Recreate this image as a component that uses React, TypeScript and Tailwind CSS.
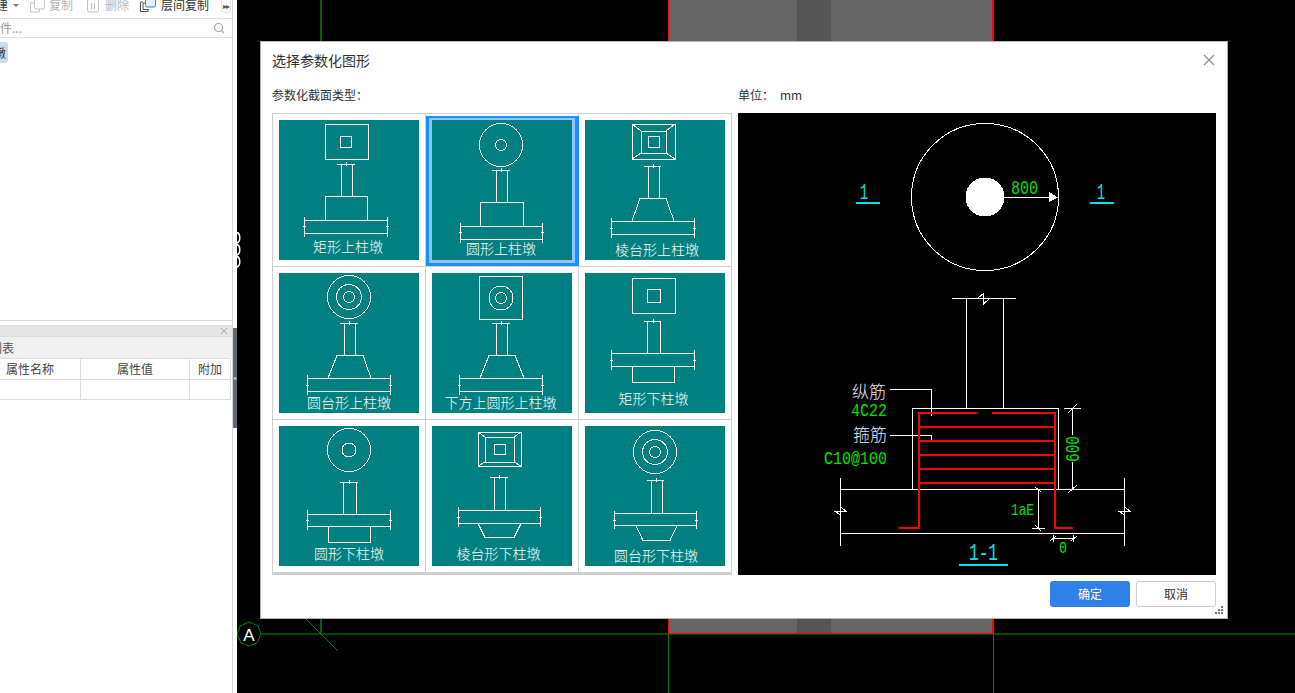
import type { ReactNode } from "react";

type Tile = {
  label: string;
  labelX: number;
  labelY: number;
  plan: ReactNode;
  elevation: ReactNode;
};

function Box({ x1, x2, y1, y2 }: { x1: number; x2: number; y1: number; y2: number }) {
  return <rect x={x1 + 0.5} y={y1 + 0.5} width={x2 - x1} height={y2 - y1} />;
}

function Ring({ cx, cy, r }: { cx: number; cy: number; r: number }) {
  return <circle cx={cx} cy={cy} r={r} />;
}

// frustum seen from above: outer box, inner box, corner lines
function Frustum({ o, m, i }: { o: number[]; m: number[]; i: number[] }) {
  return (
    <>
      <Box x1={o[0]} x2={o[1]} y1={o[2]} y2={o[3]} />
      <Box x1={m[0]} x2={m[1]} y1={m[2]} y2={m[3]} />
      <Box x1={i[0]} x2={i[1]} y1={i[2]} y2={i[3]} />
      <path
        d={`M${o[0]} ${o[2]}L${m[0]} ${m[2]}M${o[1]} ${o[2]}L${m[1]} ${m[2]}M${o[0]} ${o[3]}L${m[0]} ${m[3]}M${o[1]} ${o[3]}L${m[1]} ${m[3]}`}
      />
    </>
  );
}

function Column({ capL, capR, l, r, top, end }: { capL: number; capR: number; l: number; r: number; top: number; end: number }) {
  const mid = Math.round((capL + capR) / 2);
  return (
    <path
      d={`M${capL} ${top + 0.5}H${capR}M${l + 0.5} ${top}V${end}M${r + 0.5} ${top}V${end}M${mid + 0.5} ${top - 2}V${top + 2}`}
    />
  );
}

function Slab({ l, r, top, bottom, v1, v2, tick }: { l: number; r: number; top: number; bottom: number; v1: number; v2: number; tick: number }) {
  return (
    <path
      d={`M${l} ${top + 0.5}H${r}M${l} ${bottom + 0.5}H${r}M${l + 0.5} ${v1}V${v2}M${r + 0.5} ${v1}V${v2}M${l - 1} ${tick + 0.5}H${l + 2}M${r - 1} ${tick + 0.5}H${r + 2}`}
    />
  );
}

const tiles: Tile[] = [
  {
    label: "矩形上柱墩",
    labelX: 69,
    labelY: 132,
    plan: (
      <>
        <Box x1={46} x2={89} y1={4} y2={39} />
        <Box x1={61} x2={72} y1={16} y2={27} />
      </>
    ),
    elevation: (
      <>
        <Column capL={58} capR={76} l={62} r={73} top={44} end={76} />
        <Box x1={46} x2={88} y1={76} y2={100} />
        <Slab l={25} r={108} top={100} bottom={113} v1={97} v2={117} tick={106} />
      </>
    ),
  },
  {
    label: "圆形上柱墩",
    labelX: 69,
    labelY: 134,
    plan: (
      <>
        <Ring cx={69} cy={25} r={21.5} />
        <Ring cx={69} cy={25} r={5.5} />
      </>
    ),
    elevation: (
      <>
        <Column capL={60} capR={78} l={64} r={75} top={50} end={82} />
        <Box x1={48} x2={91} y1={82} y2={106} />
        <Slab l={28} r={110} top={106} bottom={119} v1={103} v2={123} tick={112} />
      </>
    ),
  },
  {
    label: "棱台形上柱墩",
    labelX: 72,
    labelY: 135,
    plan: <Frustum o={[47, 90, 4, 39]} m={[56, 81, 11, 33]} i={[63, 74, 16, 27]} />,
    elevation: (
      <>
        <Column capL={59} capR={76} l={63} r={74} top={46} end={78} />
        <path d="M55 78.5H81L89 101M55 78.5L47 101" />
        <Slab l={26} r={109} top={101} bottom={114} v1={98} v2={118} tick={108} />
      </>
    ),
  },
  {
    label: "圆台形上柱墩",
    labelX: 70,
    labelY: 135,
    plan: (
      <>
        <Ring cx={70} cy={24} r={21.5} />
        <Ring cx={70} cy={24} r={12.5} />
        <Ring cx={70} cy={24} r={5.5} />
      </>
    ),
    elevation: (
      <>
        <Column capL={61} capR={79} l={65} r={76} top={50} end={82} />
        <path d="M58 82.5H84L92 105M58 82.5L49 105" />
        <Slab l={28} r={111} top={105} bottom={118} v1={102} v2={122} tick={112} />
      </>
    ),
  },
  {
    label: "下方上圆形上柱墩",
    labelX: 68.5,
    labelY: 135,
    plan: (
      <>
        <Box x1={47} x2={90} y1={3} y2={46} />
        <Ring cx={69} cy={25} r={12} />
        <Ring cx={69} cy={25} r={5.5} />
      </>
    ),
    elevation: (
      <>
        <Column capL={60} capR={78} l={64} r={75} top={50} end={82} />
        <path d="M57 82.5H83L92 105M57 82.5L48 105" />
        <Slab l={27} r={110} top={105} bottom={118} v1={102} v2={122} tick={112} />
      </>
    ),
  },
  {
    label: "矩形下柱墩",
    labelX: 68.5,
    labelY: 131,
    plan: (
      <>
        <Box x1={47} x2={90} y1={5} y2={40} />
        <Box x1={62} x2={75} y1={16} y2={29} />
      </>
    ),
    elevation: (
      <>
        <Column capL={59} capR={76} l={62} r={75} top={48} end={80} />
        <Slab l={26} r={109} top={80} bottom={93} v1={77} v2={97} tick={87} />
        <Box x1={47} x2={89} y1={93} y2={109} />
      </>
    ),
  },
  {
    label: "圆形下柱墩",
    labelX: 70,
    labelY: 133,
    plan: (
      <>
        <Ring cx={70} cy={24} r={21.5} />
        <Ring cx={70} cy={24} r={7} />
      </>
    ),
    elevation: (
      <>
        <Column capL={61} capR={79} l={64} r={77} top={56} end={88} />
        <Slab l={28} r={111} top={88} bottom={100} v1={84} v2={104} tick={94} />
        <Box x1={49} x2={91} y1={100} y2={116} />
      </>
    ),
  },
  {
    label: "棱台形下柱墩",
    labelX: 66.5,
    labelY: 133,
    plan: <Frustum o={[46, 89, 6, 40]} m={[53, 82, 11, 36]} i={[62, 73, 18, 28]} />,
    elevation: (
      <>
        <Column capL={58} capR={76} l={62} r={73} top={51} end={84} />
        <Slab l={26} r={108} top={84} bottom={97} v1={81} v2={101} tick={91} />
        <path d="M46 97.5L53 111.5H82L89 97.5" />
      </>
    ),
  },
  {
    label: "圆台形下柱墩",
    labelX: 71,
    labelY: 135,
    plan: (
      <>
        <Ring cx={70} cy={26} r={21.5} />
        <Ring cx={70} cy={26} r={12.5} />
        <Ring cx={70} cy={26} r={5.5} />
      </>
    ),
    elevation: (
      <>
        <Column capL={62} capR={79} l={66} r={77} top={54} end={87} />
        <Slab l={29} r={111} top={87} bottom={99} v1={85} v2={103} tick={94} />
        <path d="M51 99.5L58 114.5H85L92 99.5" />
      </>
    ),
  },
];

function TileCell({ tile, selected }: { tile: Tile; selected: boolean }) {
  return (
    <div className="relative border-r border-b border-[#cfcfcf] p-[6px]">
      <svg width="140" height="140" viewBox="0 0 140 140" className="block bg-[#008080]">
        <g fill="none" stroke="#ffffff" strokeWidth="1" shapeRendering="crispEdges">
          {tile.plan}
          {tile.elevation}
        </g>
        <text x={tile.labelX} y={tile.labelY} textAnchor="middle" fontSize="14" fontWeight="300" fill="#ffffff">
          {tile.label}
        </text>
      </svg>
      {selected && (
        <div className="absolute top-[2px] -right-px bottom-0 left-0 border-t-2 border-r-4 border-b-[3px] border-l-[3px] border-[#1890ff]">
          <div className="h-full w-full border-t-2 border-r-[3px] border-b-[3px] border-l-[3px] border-[#8fc5fb]" />
        </div>
      )}
    </div>
  );
}

function CadText({ x, y, width, size, fill, children }: { x: number; y: number; width: number; size: number; fill: string; children: string }) {
  return (
    <text
      x={x}
      y={y}
      fontFamily="'Liberation Mono', monospace"
      fontSize={size}
      fill={fill}
      textLength={width}
      lengthAdjust="spacingAndGlyphs"
    >
      {children}
    </text>
  );
}

// the big detail drawing on the right of the dialog
function Preview() {
  const green = "#00e000";
  const cyan = "#00e6e6";
  return (
    <svg width="478" height="462" viewBox="738 113 478 462" className="block bg-black">
      <g fill="none" stroke="#ffffff" strokeWidth="1" shapeRendering="crispEdges">
        <circle cx="985" cy="197" r="73.5" />
        <circle cx="985" cy="197" r="19" fill="#ffffff" />
        <path d="M1004 197.5H1058" />
        <path d="M1049 192.5L1057 197.5L1049 201.5Z" fill="#ffffff" />

        <path d="M952 298.5H1016M978 298L983.5 293.5V304L989 299" />
        <path d="M966.5 298V408M1003.5 298V408" />
        <path d="M912.5 489V408.5H1058.5V489" />
        <path d="M840 489.5H1125M840 533.5H1125M840.5 478V546M1124.5 478V546" />
        <path d="M841 507L846 511.5H835L841 515" />
        <path d="M1125 507L1130 511.5H1119L1125 515" />

        <path d="M890 389.5H931.5V416" />
        <path d="M890 435.5H931.5V441" />

        <path d="M1064 408.5H1081M1072.5 408V435M1072.5 462V489M1068 413L1077 404M1068 493L1077 485" />
        <path d="M1038.5 489V528M1032 528.5H1045M1035 487L1041 492M1035 525L1041 531" />
        <path d="M1053 538.5H1075M1053.5 535V542M1073.5 535V542M1050 541L1056 536M1071 541L1077 536" />
      </g>

      <g stroke="#ff0000" strokeWidth="2" fill="none" shapeRendering="crispEdges">
        <path d="M899 528H919V413H977" />
        <path d="M992 413H1055V528H1073" />
        <path d="M919 427H1055M919 441H1055M919 455H1055M919 469H1055M919 483H1055" />
      </g>

      <g fill={cyan} shapeRendering="crispEdges">
        <rect x="856" y="202" width="24" height="2" />
        <rect x="1090" y="202" width="24" height="2" />
        <rect x="959" y="564" width="49" height="2" />
      </g>

      <CadText x={860} y={199} width={8} size={22} fill={cyan}>1</CadText>
      <CadText x={1097} y={199} width={8} size={22} fill={cyan}>1</CadText>
      <CadText x={969} y={560} width={29} size={24} fill={cyan}>1-1</CadText>
      <CadText x={1011} y={194} width={27} size={20} fill={green}>800</CadText>
      <CadText x={851} y={416} width={36} size={19} fill={green}>4C22</CadText>
      <CadText x={824} y={464} width={63} size={19} fill={green}>C10@100</CadText>
      <CadText x={1011} y={515} width={23} size={17} fill={green}>1aE</CadText>
      <CadText x={1059} y={553} width={8} size={16} fill={green}>0</CadText>
      <g transform="translate(1079 462) rotate(-90)">
        <CadText x={0} y={0} width={26} size={20} fill={green}>600</CadText>
      </g>

      <text x="852" y="398" fontSize="17" fontWeight="300" fill="#e4e8ff">纵筋</text>
      <text x="853" y="441" fontSize="17" fontWeight="300" fill="#e4e8ff">箍筋</text>
    </svg>
  );
}

function CanvasDrawing() {
  return (
    <svg viewBox="237 0 1058 693" className="block h-[693px] w-[1058px]">
      <g shapeRendering="crispEdges">
        <rect x="669" y="0" width="324" height="633" fill="#666666" />
        <rect x="797" y="0" width="34" height="633" fill="#555555" />
        <rect x="320" y="0" width="2" height="634" fill="#0a5c0a" />
        <rect x="261" y="633" width="1034" height="2" fill="#024a02" />
        <rect x="668" y="634" width="1" height="59" fill="#0a800a" />
        <rect x="993" y="634" width="1" height="59" fill="#0a800a" />
        <rect x="668" y="0" width="1" height="633" fill="#ff0000" />
        <rect x="992" y="0" width="2" height="634" fill="#ff0000" />
        <rect x="668" y="633" width="325" height="1" fill="#ff0000" />
      </g>
      <path d="M306 619L338 651" stroke="#0a800a" strokeWidth="1" />
      <polygon
        points="249,622 258,626 261,634 257,643 249,646 241,643 237,634 240,626"
        fill="none"
        stroke="#0a800a"
        strokeWidth="1"
      />
      <text x="249" y="641" textAnchor="middle" fontFamily="'Liberation Sans', sans-serif" fontSize="17" fill="#ffffff">A</text>
      <path
        d="M236 232.5C241 232.5 241 243 236 243M236 244.5C241 244.5 241 255 236 255M236 256.5C241 256.5 241 267 236 267"
        fill="none"
        stroke="#ffffff"
        strokeWidth="1.5"
      />
    </svg>
  );
}

function LeftPanel() {
  return (
    <aside className="flex h-full w-[237px] shrink-0 bg-white">
      <div className="flex h-full w-[233px] flex-col border-r border-[#d6d6d6] text-xs">
        <div className="relative h-[19px] shrink-0 border-b border-[#e0e0e0]">
          <div className="flex h-[10px] items-center text-[#333]">
            <span className="w-[13px] shrink-0 -translate-x-[4px]">建</span>
            <span className="h-0 w-0 border-x-[3px] border-t-[3px] border-x-transparent border-t-[#777]" />
            <svg width="16" height="13" viewBox="0 0 16 13" fill="none" className="mt-[2px] ml-[10px] shrink-0">
              <path d="M5 3H1.5V12H10.5V9" stroke="#c4c4c4" />
              <rect x="5.5" y="-3" width="10" height="12" rx="1.5" stroke="#c4c4c4" />
            </svg>
            <span className="ml-[4px] shrink-0 text-[#b5b5b5]">复制</span>
            <svg width="13" height="13" viewBox="0 0 13 13" fill="none" className="mt-[2px] ml-[14px] shrink-0">
              <rect x="0.5" y="-2" width="11" height="14" rx="1.5" stroke="#c4c4c4" />
              <path d="M4.5 3V9M7.5 3V9" stroke="#c4c4c4" />
            </svg>
            <span className="ml-[5px] shrink-0 text-[#b5b5b5]">删除</span>
            <svg width="16" height="12" viewBox="0 0 16 12" fill="none" className="mt-[2px] ml-[11px] shrink-0">
              <path d="M3 2H0.5V11.5H8V9" stroke="#555" />
              <path d="M5 3H3V9.5H9" stroke="#555" />
              <rect x="5.5" y="-4" width="10" height="11" rx="1.5" fill="#e3f0ff" stroke="#2f80e7" />
            </svg>
            <span className="ml-[5px] shrink-0 text-[#333]">层间复制</span>
          </div>
          <div className="absolute top-0 right-[1px] flex h-[13px] w-[10px] items-center justify-center rounded-b border-x border-b border-[#e5e5e5] bg-white text-[8px] leading-none tracking-[-1px] text-[#555]">
            ▸▸
          </div>
        </div>

        <div className="flex h-[19px] shrink-0 items-center justify-between border-b border-[#e0e0e0] pr-[7px]">
          <span className="-ml-[12px] text-[#999]">构件...</span>
          <svg width="12" height="12" viewBox="0 0 12 12" fill="none">
            <circle cx="5.5" cy="5.5" r="4" stroke="#aaa" strokeWidth="1.2" />
            <path d="M8.5 8.5L11 11" stroke="#aaa" strokeWidth="1.2" />
          </svg>
        </div>

        <div className="h-[283px] shrink-0 border-b border-[#d6d6d6] pt-[4px]">
          <div className="flex h-[21px] w-[8px] items-center justify-end overflow-hidden rounded-r-[3px] bg-[#c5dcf5] pr-[2px] text-[#333]">
            <span className="shrink-0">墩</span>
          </div>
        </div>

        <div className="mt-[4px] flex h-[12px] shrink-0 items-center justify-end border-y border-[#dcdcdc] bg-[#e6e6e6] pr-[4px]">
          <svg width="8" height="8" viewBox="0 0 8 8">
            <path d="M1 1L7 7M7 1L1 7" stroke="#a5a5a5" />
          </svg>
        </div>
        <div className="flex h-[21px] shrink-0 items-center overflow-hidden bg-[#f0f0f0] text-[#555]">
          <span className="-ml-[10px] shrink-0">列表</span>
        </div>
        <div className="w-[231px] text-[#444]">
          {[0, 1].map((row) => (
            <div key={row} className={`grid h-[21px] grid-cols-[81px_109px_41px] border-t border-[#dcdcdc] ${row === 1 ? "border-b" : ""}`}>
              <div className="flex items-center justify-center border-r border-[#dcdcdc] pr-[20px]">{row === 0 ? "属性名称" : ""}</div>
              <div className="flex items-center justify-center border-r border-[#dcdcdc]">{row === 0 ? "属性值" : ""}</div>
              <div className="flex items-center justify-center border-r border-[#dcdcdc]">{row === 0 ? "附加" : ""}</div>
            </div>
          ))}
        </div>
      </div>
      <div className="flex w-[4px] flex-col">
        <div className="h-[328px] bg-white" />
        <div className="flex h-[100px] items-center bg-[#5f6b7a] text-[6px] leading-none text-[#ddd]">◂</div>
      </div>
    </aside>
  );
}

export default function App() {
  return (
    <div className="relative flex h-[693px] w-[1295px] overflow-hidden bg-black font-['Noto_Sans_CJK_SC','Noto_Sans',sans-serif]">
      <LeftPanel />
      <main className="flex-1">
        <CanvasDrawing />
      </main>

      <div className="absolute top-[41px] left-[260px] h-[578px] w-[968px] border border-[#b4b4b4] bg-white">
        <div className="flex h-[36px] items-center justify-between pr-[12px] pl-[11px] text-[14px] text-[#333]">
          <span>选择参数化图形</span>
          <svg width="12" height="12" viewBox="0 0 12 12">
            <path d="M1 1L11 11M11 1L1 11" stroke="#8a8a8a" strokeWidth="1.1" />
          </svg>
        </div>
        <div className="flex h-[35px] items-center pb-[2px] pl-[11px] text-xs text-[#333]">
          <span className="w-[466px]">参数化截面类型：</span>
          <span className="w-[42px]">单位：</span>
          <span>mm</span>
        </div>
        <div className="flex gap-[6px] pl-[11px]">
          <div className="grid h-[462px] w-[460px] grid-cols-[153px_153px_153px] content-start border-t border-b-2 border-l border-[#cfcfcf]">
            {tiles.map((tile, i) => (
              <TileCell key={tile.label} tile={tile} selected={i === 1} />
            ))}
          </div>
          <Preview />
        </div>
        <div className="mt-[6px] flex justify-end gap-[6px] pr-[11px] text-xs">
          <button className="h-[26px] w-[80px] rounded-[3px] bg-[#2f80e7] text-white">确定</button>
          <button className="h-[26px] w-[80px] rounded-[3px] border border-[#cccccc] bg-white text-[#333]">取消</button>
        </div>
        <svg width="9" height="9" viewBox="0 0 9 9" className="absolute right-[3px] bottom-[3px]" fill="#777">
          <rect x="6" y="0" width="2" height="2" />
          <rect x="3" y="3" width="2" height="2" />
          <rect x="6" y="3" width="2" height="2" />
          <rect x="0" y="6" width="2" height="2" />
          <rect x="3" y="6" width="2" height="2" />
          <rect x="6" y="6" width="2" height="2" />
        </svg>
      </div>
    </div>
  );
}
